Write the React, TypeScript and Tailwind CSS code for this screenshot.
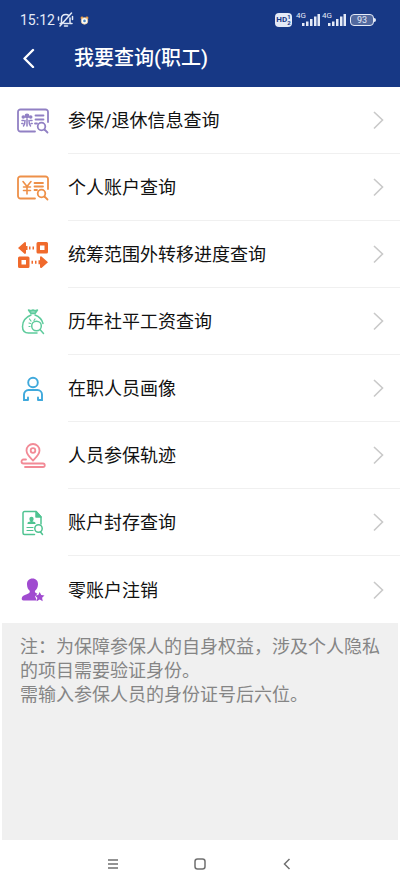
import React from 'react';

interface MenuItem {
  label: string;
  icon: React.ReactNode;
}

const InsuranceIcon = () => (
  <svg width="32" height="26" viewBox="0 0 32 26" fill="none" stroke="#9180c4" strokeWidth="1.8" strokeLinecap="round">
    <path d="M18 23.500H3.500A2.500 2.500 0 0 1 1 21V4a2.500 2.500 0 0 1 2.500-2.500h25A2.500 2.500 0 0 1 31 4v10" />
    <path d="M18.500 7.500h8M18.500 11.500h8M18 15.500h2" />
    <circle cx="24.500" cy="18.500" r="3.800" />
    <path d="m27.500 21.500 3 3" />
    <g fill="#9180c4" stroke="none">
      <circle cx="10" cy="8" r="2.400" />
      <circle cx="6.300" cy="9" r="1.800" />
      <circle cx="13.700" cy="9" r="1.800" />
    </g>
    <path d="M10 11v7M8 12.500c0 2.500-.3 4-1.500 5.500M12 12.500c0 2.500.3 4 1.500 5.500M5 12.500h1.500M13.500 12.500H15M4.800 15.500h1M14.200 15.500h1" strokeWidth="1.500" />
  </svg>
);

const AccountIcon = () => (
  <svg width="32" height="26" viewBox="0 0 32 26" fill="none" stroke="#ee9048" strokeWidth="1.8" strokeLinecap="round">
    <path d="M18 23.500H3.500A2.500 2.500 0 0 1 1 21V4a2.500 2.500 0 0 1 2.500-2.500h25A2.500 2.500 0 0 1 31 4v10" />
    <path d="m6 6.500 4 5 4-5M10 11.500V19M6.500 12h7M6.500 15.500h7" strokeWidth="1.600" />
    <path d="M17.500 8h8.500M17.500 11.500h8.500M17.500 15h2.500" />
    <circle cx="24.500" cy="18.500" r="3.800" />
    <path d="m27.500 21.500 3 3" />
  </svg>
);

const TransferIcon = () => (
  <svg width="32" height="28" viewBox="0 0 32 28" fill="#f06a2c">
    <path d="M1 7 7.500 1.200Q9 .8 9 2.500V5h1.500v4H9v2.500q0 1.700-1.500 1.300Z" />
    <path d="M12 5.500h1.500v3H12zM15.500 5.500H17v3h-1.500z" />
    <path fillRule="evenodd" d="M21 1h8.500A1.500 1.500 0 0 1 31 2.500v8.500a1.500 1.500 0 0 1-1.500 1.500H21a1.500 1.500 0 0 1-1.500-1.500V2.500A1.500 1.500 0 0 1 21 1Zm2 3.500v4.500h4.500V4.500Z" />
    <path fillRule="evenodd" d="M2.500 15.500H11A1.500 1.500 0 0 1 12.500 17v8.500A1.500 1.500 0 0 1 11 27H2.500A1.500 1.500 0 0 1 1 25.500V17a1.500 1.500 0 0 1 1.500-1.500Zm2 3.500v4.500H9V19Z" />
    <path d="M14.500 19.700H16v3h-1.500zM18 19.700h1.500v3H18z" />
    <path d="m31 21.200-6.500-5.800Q23 15 23 16.700v2.500h-1.500v4H23v2.500q0 1.700 1.500 1.300Z" />
  </svg>
);

const WageIcon = () => (
  <svg width="24" height="28" viewBox="0 0 24 28" fill="none" stroke="#5ecb9c" strokeWidth="1.500" strokeLinecap="round" strokeLinejoin="round">
    <path d="m7.500 2 2.500 3.500h4L16.500 2l-2.300.8L12 2l-2.200.8Z" fill="#8edcbd" />
    <path d="M10 7C5 9 1.500 13.500 1.500 18.500c0 4 2 6.500 6 6.500H16M14 7c4 1.500 7 4.500 8 8.500" />
    <path d="M8.500 11 10 13M14 11l-1 1.500M8 15l1.500.5M8 18.500h1" strokeWidth="1.200" />
    <circle cx="15.500" cy="18" r="4.800" />
    <path d="m19 21.500 3.500 4" />
  </svg>
);

const PersonIcon = () => (
  <svg width="22" height="26" viewBox="0 0 22 26" fill="none" stroke="#3fa9dc" strokeWidth="1.900" strokeLinecap="round">
    <circle cx="11" cy="6.500" r="4.800" />
    <path d="M5.500 24H2v-5.500a4.500 4.500 0 0 1 4.500-4.500h9a4.500 4.500 0 0 1 4.500 4.500V24h-3.500M6 21.500V24M16 21.500V24" />
  </svg>
);

const TrackIcon = () => (
  <svg width="26" height="27" viewBox="0 0 26 27" fill="none" stroke="#f28a96" strokeWidth="1.800" strokeLinecap="round" strokeLinejoin="round">
    <path d="M13 18.500c-3-3-6.500-6-6.500-10a6.500 6.500 0 0 1 13 0c0 4-3.500 7-6.500 10Z" />
    <circle cx="13" cy="8.500" r="2.300" />
    <path d="M6 17.500H3.500a2 2 0 0 0 0 4H23a1.700 1.700 0 0 1 0 3.500H5" />
  </svg>
);

const ArchiveIcon = () => (
  <svg width="22" height="26" viewBox="0 0 22 26" fill="none" stroke="#4fc391" strokeWidth="1.500" strokeLinecap="round" strokeLinejoin="round">
    <path d="M12.500 24.500H2.500A1.500 1.500 0 0 1 1 23V3a1.500 1.500 0 0 1 1.500-1.500H14l5 5.500v7" />
    <path d="M14 1.500V7h5Z" fill="#4fc391" />
    <circle cx="9.500" cy="9" r="2.200" fill="#4fc391" stroke="none" />
    <path d="M5.500 14v-.8c0-1 1.200-1.500 2.900-1.700V10h2.200v1.500c1.700.2 2.900.7 2.900 1.700v.8Z" fill="#4fc391" stroke="none" />
    <path d="M5 17.500h6M5 20.500h6" strokeWidth="1.200" />
    <circle cx="16.500" cy="18.500" r="3.700" />
    <path d="m18.500 22 2 2.500" />
  </svg>
);

const CancelIcon = () => (
  <svg width="24" height="26" viewBox="0 0 24 26" fill="#a04bd0">
    <path d="M11.500 1.500c3.500 0 5.700 2.500 5.500 6-.2 3-1.300 4.800-2.700 6-.8.900-.4 2 .7 2.500l1.500.7-2.500 2.500 1.800 4.300H2.500C1 23.500.5 22.500.8 21c.3-2 2.200-3 5-3.800 2.400-.7 3.700-2.200 2.700-3.700C7 12.300 6.100 10.500 6 7.500c-.2-3.500 2-6 5.500-6Z" />
    <path d="m18.700 15 1.500 3 3.300.4-2.400 2.400.6 3.400-3-1.600-3 1.600.6-3.400-2.400-2.400 3.300-.4Z" />
  </svg>
);

const items: MenuItem[] = [
  { label: '参保/退休信息查询', icon: <InsuranceIcon /> },
  { label: '个人账户查询', icon: <AccountIcon /> },
  { label: '统筹范围外转移进度查询', icon: <TransferIcon /> },
  { label: '历年社平工资查询', icon: <WageIcon /> },
  { label: '在职人员画像', icon: <PersonIcon /> },
  { label: '人员参保轨迹', icon: <TrackIcon /> },
  { label: '账户封存查询', icon: <ArchiveIcon /> },
  { label: '零账户注销', icon: <CancelIcon /> },
];

const SignalBars = () => (
  <svg width="18" height="12" viewBox="0 0 18 12" fill="#e4eaf7">
    <path d="M0 9h2.500v3H0zM4 7.500h2.500V12H4zM8 5h2.500v7H8zM12 2.500h2.500V12H12zM15.500 0H18v12h-2.500z" />
  </svg>
);

const Signal = () => (
  <span className="relative flex w-6 justify-end">
    <span className="absolute -top-1 left-0 text-[8px] leading-3">4G</span>
    <SignalBars />
  </span>
);

const StatusBar = () => (
  <div className="flex h-10 items-center justify-between pr-6 pl-5 text-[#e4eaf7]">
    <div className="flex items-center">
      <span className="text-sm leading-5">15:12</span>
      <svg className="ml-0.5" width="17" height="16" viewBox="0 0 17 16" fill="none" stroke="currentColor" strokeWidth="1.500" strokeLinecap="round">
        <path d="M3 11.500h1.500V6.500C4.500 4 6.500 2.500 9 2.500c1 0 2 .3 2.700.8M13 6v5.500h2M7 11.500h4.500M7.500 14h3M1.500 5v3M15.500 4.500v3M14.500 1 3 14" />
      </svg>
      <svg className="ml-1.5" width="9" height="9" viewBox="0 0 11 11">
        <circle cx="2.500" cy="2.500" r="1.800" fill="#e89b45" />
        <circle cx="8.500" cy="2.500" r="1.800" fill="#e89b45" />
        <circle cx="5.500" cy="6" r="4" fill="#fff" stroke="#e6c79b" />
        <circle cx="5.500" cy="6" r="1.600" fill="#4a86bd" />
      </svg>
    </div>
    <div className="flex items-center gap-1">
      <span className="flex h-[14px] w-[17px] items-center justify-center rounded-sm bg-[#e4eaf7] text-[#173885]">
        <span className="text-[8px] leading-3 font-bold">HD</span>
        <span className="flex flex-col text-[6px] leading-[6px] font-bold">
          <span>1</span>
          <span>2</span>
        </span>
      </span>
      <span className="flex gap-0.5">
        <Signal />
        <Signal />
      </span>
      <span className="flex items-center">
        <span className="flex h-3 w-6 items-center justify-center rounded border border-current bg-[#52699f] text-[9px] leading-3">93</span>
        <span className="h-1 w-0.5 rounded-r bg-current" />
      </span>
    </div>
  </div>
);

const App: React.FC = () => {
  return (
    <div className="flex min-h-screen flex-col bg-white font-['Roboto','Noto_Sans_CJK_SC',sans-serif]">
      <header className="bg-[#173885] text-white">
        <StatusBar />
        <div className="flex h-[47px] items-start pl-5">
          <button type="button" aria-label="返回" className="flex h-9 w-[54px] items-center">
            <svg width="18" height="20" viewBox="0 0 18 20" fill="none" stroke="currentColor" strokeWidth="2.400" strokeLinecap="round" strokeLinejoin="round">
              <path d="m13 2-8.500 8.500L13 19" />
            </svg>
          </button>
          <h1 className="text-xl leading-9 font-medium">我要查询(职工)</h1>
        </div>
      </header>

      <ul>
        {items.map((item) => (
          <li key={item.label} className="group">
            <a href="#" className="flex h-[67px] items-center">
              <span className="flex w-[66px] shrink-0 justify-center">{item.icon}</span>
              <span className="ml-0.5 flex h-full flex-1 items-center justify-between border-b border-[#f0f0f0] pr-4 group-last:border-b-0">
                <span className="pt-0.5 text-lg text-[#111]">{item.label}</span>
                <svg width="11" height="20" viewBox="0 0 11 20" fill="none" stroke="#c9c9c9" strokeWidth="1.600">
                  <path d="m1 2 8.500 8L1 18.500" />
                </svg>
              </span>
            </a>
          </li>
        ))}
      </ul>

      <main className="mx-0.5 flex-1 bg-[#f0f0f0] px-[18px] pt-3 text-lg leading-6 text-[#858585]">
        <p>注：为保障参保人的自身权益，涉及个人隐私的项目需要验证身份。</p>
        <p>需输入参保人员的身份证号后六位。</p>
      </main>

      <nav className="flex h-12 items-center justify-center gap-[75px] text-[#707070]">
        <button type="button" aria-label="菜单">
          <svg width="12" height="12" viewBox="0 0 12 12" stroke="currentColor" strokeWidth="1.300">
            <path d="M1 2h10M1 6h10M1 10h10" />
          </svg>
        </button>
        <button type="button" aria-label="主页">
          <svg width="12" height="12" viewBox="0 0 12 12" fill="none" stroke="currentColor" strokeWidth="1.500">
            <rect x="1" y="1" width="10" height="10" rx="2.500" />
          </svg>
        </button>
        <button type="button" aria-label="后退">
          <svg width="12" height="12" viewBox="0 0 12 12" fill="none" stroke="currentColor" strokeWidth="1.500">
            <path d="M8.500 1 3.500 6l5 5" />
          </svg>
        </button>
      </nav>
    </div>
  );
};

export default App;
